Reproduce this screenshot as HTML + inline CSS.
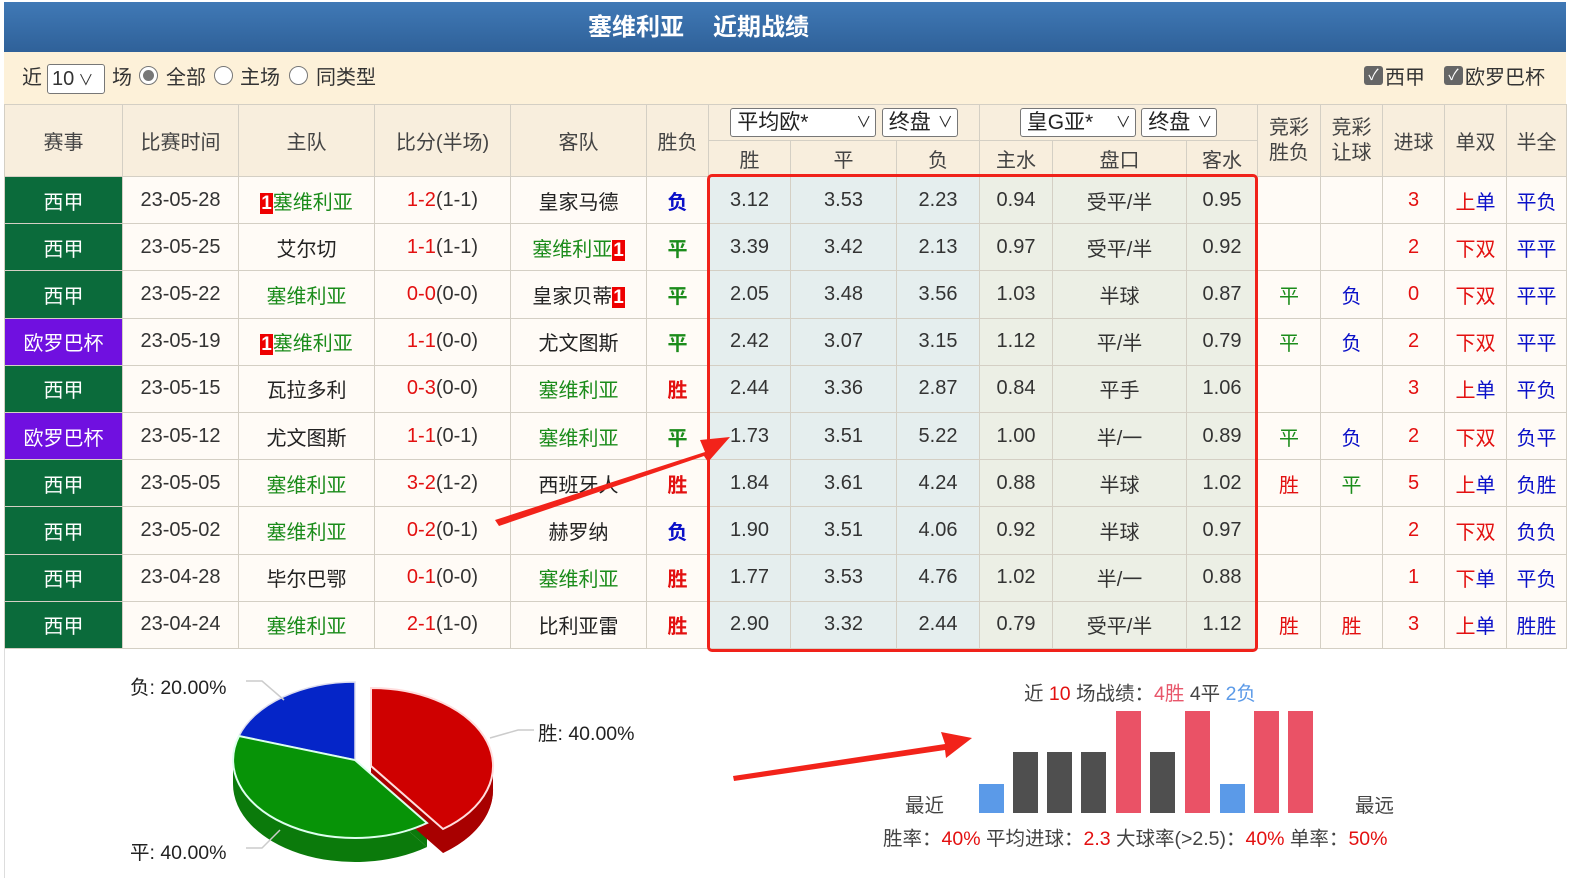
<!DOCTYPE html>
<html><head><meta charset="utf-8"><style>
*{margin:0;padding:0;box-sizing:border-box}
body{width:1596px;height:890px;background:#fff;font-family:"Liberation Sans","Noto Sans CJK SC",sans-serif;position:relative;overflow:hidden;color:#333}
.title{position:absolute;left:4px;top:2px;width:1562px;height:50px;background:linear-gradient(#4079b6,#2f6199);color:#fff;font-weight:bold;font-size:24px;line-height:52px}
.filt{position:absolute;left:4px;top:52px;width:1562px;height:52px;background:#fdf1d9;font-size:20px;color:#333}
.filt span{position:absolute;top:12px;line-height:28px}
.sel{border:1px solid #777;border-radius:3px;background:#fff;height:30px;padding:0 4px;font-size:20px}
.rad{width:19px;height:19px;border:1px solid #777;border-radius:50%;background:#fff}
.rad.on::after{content:"";position:absolute;left:3px;top:3px;width:11px;height:11px;border-radius:50%;background:#777}
.chk{width:19px;height:19px;background:#666;border-radius:3px;color:#fff;font-size:15px;line-height:19px!important;text-align:center}
table{position:absolute;left:4px;top:104px;width:1562px;border-collapse:collapse;table-layout:fixed;font-size:20px}
td{border:1px solid #d4cfc4;text-align:center;vertical-align:middle;padding:0;white-space:nowrap;overflow:hidden}
.h td{background:#f8eedd;color:#444}
tr.d td{height:47.2px;background:#fffbf6}
tr.d td.o{background:#e5eeee}
tr.d td.a{background:#ecefe5}
td.xj{background:#0b6b3b!important;color:#fff}
td.oz{background:#7010e0!important;color:#fff}
.g{color:#1b8c1b}.r{color:#e31010}.b{color:#0a10c8}.k{color:#222}
.rc{background:#e00;color:#fff;font-weight:bold;padding:0 1px;font-size:19px}
.bl{font-weight:bold}
.hs{display:inline-block;border:1px solid #777;border-radius:3px;background:#fff;height:29px;line-height:27px;font-size:21px;color:#222;text-align:left;padding-left:6px;position:relative}
.hs i{position:absolute;right:4px;font-style:normal;font-size:15px}
.box{position:absolute;left:707px;top:174px;width:551px;height:478px;border:3px solid #f0221a;border-radius:5px}
.lab{position:absolute;font-size:19.5px;color:#222}
</style></head><body>
<div class="title"><span style="position:absolute;left:584px">塞维利亚</span><span style="position:absolute;left:709px">近期战绩</span></div>
<div class="filt"><span style="left:18px">近</span><span class="sel" style="left:43px;width:58px">10<span style="position:static;font-size:15px"> ∨</span></span><span style="left:108px">场</span><span class="rad on" style="left:135px;top:14px"></span><span style="left:162px">全部</span><span class="rad" style="left:210px;top:14px"></span><span style="left:236px">主场</span><span class="rad" style="left:285px;top:14px"></span><span style="left:312px">同类型</span>
<span class="chk" style="left:1360px;top:14px">✓</span><span style="left:1381px">西甲</span><span class="chk" style="left:1440px;top:14px">✓</span><span style="left:1461px">欧罗巴杯</span></div>
<table>
<colgroup><col style="width:118px"><col style="width:116px"><col style="width:136px"><col style="width:136px"><col style="width:136px"><col style="width:62px"><col style="width:82px"><col style="width:106px"><col style="width:83px"><col style="width:73px"><col style="width:134px"><col style="width:71px"><col style="width:63px"><col style="width:62px"><col style="width:62px"><col style="width:62px"><col style="width:60px"></colgroup>
<tr class="h" style="height:36px"><td rowspan="2">赛事</td><td rowspan="2">比赛时间</td><td rowspan="2">主队</td><td rowspan="2">比分(半场)</td><td rowspan="2">客队</td><td rowspan="2">胜负</td>
<td colspan="3"><span class="hs" style="width:146px">平均欧*<i>∨</i></span> <span class="hs" style="width:76px">终盘<i>∨</i></span></td>
<td colspan="3"><span class="hs" style="width:116px">皇G亚*<i>∨</i></span> <span class="hs" style="width:76px">终盘<i>∨</i></span></td>
<td rowspan="2" style="line-height:25px">竞彩<br>胜负</td><td rowspan="2" style="line-height:25px">竞彩<br>让球</td><td rowspan="2">进球</td><td rowspan="2">单双</td><td rowspan="2">半全</td></tr>
<tr class="h" style="height:36px"><td>胜</td><td>平</td><td>负</td><td>主水</td><td>盘口</td><td>客水</td></tr>

<tr class="d"><td class="xj">西甲</td><td>23-05-28</td><td><span class="rc">1</span><span class="g">塞维利亚</span></td><td><span class="r">1-2</span>(1-1)</td><td class="k">皇家马德</td><td class="b bl">负</td><td class="o">3.12</td><td class="o">3.53</td><td class="o">2.23</td><td class="a">0.94</td><td class="a">受平/半</td><td class="a">0.95</td><td></td><td></td><td class="r">3</td><td><span class="r">上</span><span class="b">单</span></td><td class="b">平负</td></tr>
<tr class="d"><td class="xj">西甲</td><td>23-05-25</td><td class="k">艾尔切</td><td><span class="r">1-1</span>(1-1)</td><td><span class="g">塞维利亚</span><span class="rc">1</span></td><td class="g bl">平</td><td class="o">3.39</td><td class="o">3.42</td><td class="o">2.13</td><td class="a">0.97</td><td class="a">受平/半</td><td class="a">0.92</td><td></td><td></td><td class="r">2</td><td class="r">下双</td><td class="b">平平</td></tr>
<tr class="d"><td class="xj">西甲</td><td>23-05-22</td><td class="g">塞维利亚</td><td><span class="r">0-0</span>(0-0)</td><td class="k">皇家贝蒂<span class="rc">1</span></td><td class="g bl">平</td><td class="o">2.05</td><td class="o">3.48</td><td class="o">3.56</td><td class="a">1.03</td><td class="a">半球</td><td class="a">0.87</td><td class="g">平</td><td class="b">负</td><td class="r">0</td><td class="r">下双</td><td class="b">平平</td></tr>
<tr class="d"><td class="oz">欧罗巴杯</td><td>23-05-19</td><td><span class="rc">1</span><span class="g">塞维利亚</span></td><td><span class="r">1-1</span>(0-0)</td><td class="k">尤文图斯</td><td class="g bl">平</td><td class="o">2.42</td><td class="o">3.07</td><td class="o">3.15</td><td class="a">1.12</td><td class="a">平/半</td><td class="a">0.79</td><td class="g">平</td><td class="b">负</td><td class="r">2</td><td class="r">下双</td><td class="b">平平</td></tr>
<tr class="d"><td class="xj">西甲</td><td>23-05-15</td><td class="k">瓦拉多利</td><td><span class="r">0-3</span>(0-0)</td><td class="g">塞维利亚</td><td class="r bl">胜</td><td class="o">2.44</td><td class="o">3.36</td><td class="o">2.87</td><td class="a">0.84</td><td class="a">平手</td><td class="a">1.06</td><td></td><td></td><td class="r">3</td><td><span class="r">上</span><span class="b">单</span></td><td class="b">平负</td></tr>
<tr class="d"><td class="oz">欧罗巴杯</td><td>23-05-12</td><td class="k">尤文图斯</td><td><span class="r">1-1</span>(0-1)</td><td class="g">塞维利亚</td><td class="g bl">平</td><td class="o">1.73</td><td class="o">3.51</td><td class="o">5.22</td><td class="a">1.00</td><td class="a">半/一</td><td class="a">0.89</td><td class="g">平</td><td class="b">负</td><td class="r">2</td><td class="r">下双</td><td class="b">负平</td></tr>
<tr class="d"><td class="xj">西甲</td><td>23-05-05</td><td class="g">塞维利亚</td><td><span class="r">3-2</span>(1-2)</td><td class="k">西班牙人</td><td class="r bl">胜</td><td class="o">1.84</td><td class="o">3.61</td><td class="o">4.24</td><td class="a">0.88</td><td class="a">半球</td><td class="a">1.02</td><td class="r">胜</td><td class="g">平</td><td class="r">5</td><td><span class="r">上</span><span class="b">单</span></td><td class="b">负胜</td></tr>
<tr class="d"><td class="xj">西甲</td><td>23-05-02</td><td class="g">塞维利亚</td><td><span class="r">0-2</span>(0-1)</td><td class="k">赫罗纳</td><td class="b bl">负</td><td class="o">1.90</td><td class="o">3.51</td><td class="o">4.06</td><td class="a">0.92</td><td class="a">半球</td><td class="a">0.97</td><td></td><td></td><td class="r">2</td><td class="r">下双</td><td class="b">负负</td></tr>
<tr class="d"><td class="xj">西甲</td><td>23-04-28</td><td class="k">毕尔巴鄂</td><td><span class="r">0-1</span>(0-0)</td><td class="g">塞维利亚</td><td class="r bl">胜</td><td class="o">1.77</td><td class="o">3.53</td><td class="o">4.76</td><td class="a">1.02</td><td class="a">半/一</td><td class="a">0.88</td><td></td><td></td><td class="r">1</td><td><span class="r">下</span><span class="b">单</span></td><td class="b">平负</td></tr>
<tr class="d"><td class="xj">西甲</td><td>23-04-24</td><td class="g">塞维利亚</td><td><span class="r">2-1</span>(1-0)</td><td class="k">比利亚雷</td><td class="r bl">胜</td><td class="o">2.90</td><td class="o">3.32</td><td class="o">2.44</td><td class="a">0.79</td><td class="a">受平/半</td><td class="a">1.12</td><td class="r">胜</td><td class="r">胜</td><td class="r">3</td><td><span class="r">上</span><span class="b">单</span></td><td class="b">胜胜</td></tr>
</table>
<div class="box"></div>
<div style="position:absolute;left:4px;top:648px;width:1px;height:230px;background:#ddd"></div>

<svg width="1596" height="890" style="position:absolute;left:0;top:0">
<polygon points="495,520 705,452 700,440 730,437 708,462 704,456 499,526" fill="#f2231a"/>
<polygon points="733,776 945,744 941,732 972,738 946,758 945,750 734,781" fill="#f2231a"/>
<path d="M355,784 L427,847 A122,78 0 0 1 233,784 L233,760 A122,78 0 0 0 427,823 Z" fill="#0b7a0b"/>
<path d="M355,760 L427,823 L427,847 L355,784 Z" fill="#0b7a0b"/>
<path d="M371,790 L371,712 A122,78 0 0 1 443,853 Z" fill="#a80000"/>
<path d="M493,766 L493,790 A122,78 0 0 1 443,853 L443,829 Z" fill="#a80000"/>
<path d="M355,760 L239,736 A122,78 0 0 1 355,682 Z" fill="#0525c8" stroke="#dde" stroke-width="1.5"/>
<path d="M355,760 L427,823 A122,78 0 0 1 239,736 Z" fill="#079307" stroke="#dfe" stroke-width="2"/>
<path d="M371,766 L371,688 A122,78 0 0 1 443,829 Z" fill="#cf0000" stroke="#fdd" stroke-width="2"/>
<polyline points="246,681 262,681 284,700" fill="none" stroke="#ccc" stroke-width="1.5"/>
<polyline points="490,738 518,730 534,730" fill="none" stroke="#ccc" stroke-width="1.5"/>
<polyline points="246,848 262,848 280,830" fill="none" stroke="#ccc" stroke-width="1.5"/>
<rect x="979" y="784" width="25" height="29" fill="#5b9ae8"/>
<rect x="1013" y="752" width="25" height="61" fill="#4f4f4f"/>
<rect x="1047" y="752" width="25" height="61" fill="#4f4f4f"/>
<rect x="1081" y="752" width="25" height="61" fill="#4f4f4f"/>
<rect x="1116" y="711" width="25" height="102" fill="#ea5266"/>
<rect x="1150" y="752" width="25" height="61" fill="#4f4f4f"/>
<rect x="1185" y="711" width="25" height="102" fill="#ea5266"/>
<rect x="1220" y="784" width="25" height="29" fill="#5b9ae8"/>
<rect x="1254" y="711" width="25" height="102" fill="#ea5266"/>
<rect x="1288" y="711" width="25" height="102" fill="#ea5266"/>
</svg>
<div class="lab" style="left:130px;top:671px">负: 20.00%</div>
<div class="lab" style="left:538px;top:717px">胜: 40.00%</div>
<div class="lab" style="left:130px;top:836px">平: 40.00%</div>
<div class="lab" style="left:1024px;top:677px;color:#444">近 <span class="r">10</span> 场战绩：<span style="color:#e8566a">4胜</span> 4平 <span style="color:#5b9ae8">2负</span></div>
<div class="lab" style="left:905px;top:789px;color:#444">最近</div>
<div class="lab" style="left:1355px;top:789px;color:#444">最远</div>
<div class="lab" style="left:883px;top:822px;color:#444">胜率：<span class="r">40%</span> 平均进球：<span class="r">2.3</span> 大球率(&gt;2.5)：<span class="r">40%</span> 单率：<span class="r">50%</span></div>
</body></html>
